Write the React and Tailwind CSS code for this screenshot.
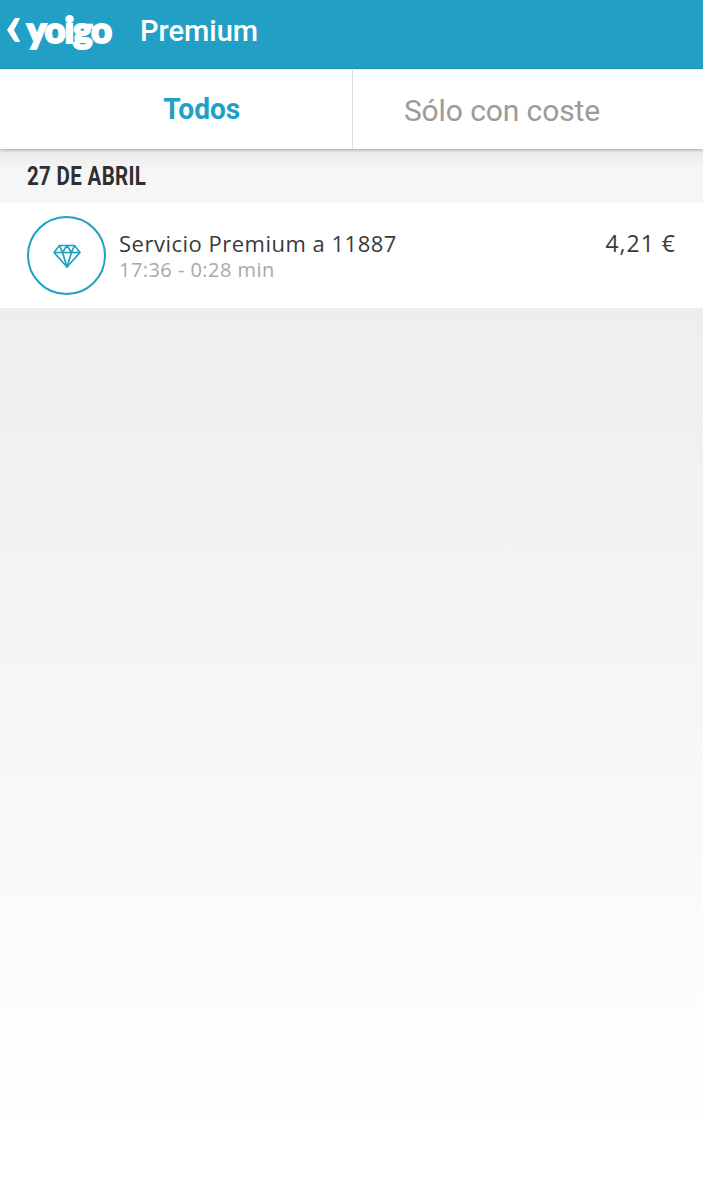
import React from "react"

function BackChevron() {
  return (
    <svg width="15" height="26" viewBox="0 0 15 26" fill="white" stroke="white" strokeWidth="1" strokeLinejoin="round">
      <path d="M9 1.5 H13.5 L7.5 13 L13.5 24.5 H9 L1.5 13 Z" />
    </svg>
  )
}

function DiamondIcon() {
  return (
    <svg width="30" height="26" viewBox="0 0 30 26" fill="none" stroke="#229fc5" strokeWidth="1.7" strokeLinejoin="round">
      <path d="M7.5 2.5 H22.5 L28 9.5 L15 24 L2 9.5 Z" />
      <path d="M2 9.5 H28" />
      <path d="M7.5 2.5 L10.5 9.5 L15 2.5 L19.5 9.5 L22.5 2.5" />
      <path d="M10.5 9.5 L15 24 L19.5 9.5" />
    </svg>
  )
}

function App() {
  return (
    <div className="flex h-[1200px] w-[703px] flex-col overflow-hidden bg-white font-['Roboto',sans-serif]">
      <header className="flex h-[69px] shrink-0 items-start bg-[#229fc5] text-white">
        <div className="ml-[6px] mt-[17px] shrink-0">
          <BackChevron />
        </div>
        <span className="ml-[6px] mt-[9px] w-[86px] shrink-0 font-['Lato',sans-serif] text-[36px] leading-[40px] font-black tracking-[-0.8px] [-webkit-text-stroke:2.2px_white]">
          yoigo
        </span>
        <span className="ml-[27px] mt-[13px] font-['Roboto',sans-serif] text-[29px] leading-[36px] font-medium">
          Premium
        </span>
      </header>

      <nav className="z-10 flex h-[80px] shrink-0 border-t border-[#e6f3f7] bg-white shadow-[0_1px_3px_rgba(0,0,0,0.28)]">
        <div className="flex w-[353px] items-center justify-center border-r border-[#dcdcdc] pl-[51px] text-[29px] font-bold text-[#229fc5]">
          <span className="scale-x-[0.97]">Todos</span>
        </div>
        <div className="flex flex-1 items-center justify-center pr-[52px] pt-px text-[30px] tracking-[-0.1px] text-[#9b9b9b]">Sólo con coste</div>
      </nav>

      <div className="flex h-[54px] shrink-0 items-center bg-gradient-to-b from-[#e9e9e9] to-[#f6f6f6] to-40% pl-[27px] pt-[2px] font-['Roboto',sans-serif] text-[25px] font-bold tracking-[0.4px] text-[#2f2f2f]">
        <span className="origin-left scale-x-[0.82]">27 DE ABRIL</span>
      </div>

      <div className="flex h-[105px] shrink-0 items-start bg-white pl-[27px] pr-[27px] pt-[13px]">
        <div className="flex h-[79px] w-[79px] shrink-0 items-center justify-center rounded-full border-2 border-[#229fc5]">
          <DiamondIcon />
        </div>
        <div className="ml-[13px] flex-1 font-['Open_Sans',sans-serif]">
          <p className="mt-[14px] text-[22px] leading-[26px] tracking-[0.5px] text-[#3a3a3a]">Servicio Premium a 11887</p>
          <p className="text-[20px] leading-[27px] tracking-[0.45px] text-[#a8a8ad]">17:36 - 0:28 min</p>
        </div>
        <span className="mt-[14px] font-['Open_Sans',sans-serif] text-[23px] leading-[26px] tracking-[1px] text-[#3a3a3a]">4,21 €</span>
      </div>

      <div className="flex-1 bg-gradient-to-b from-[#eeeeee] to-white to-[92%]" />
    </div>
  )
}

export default App
